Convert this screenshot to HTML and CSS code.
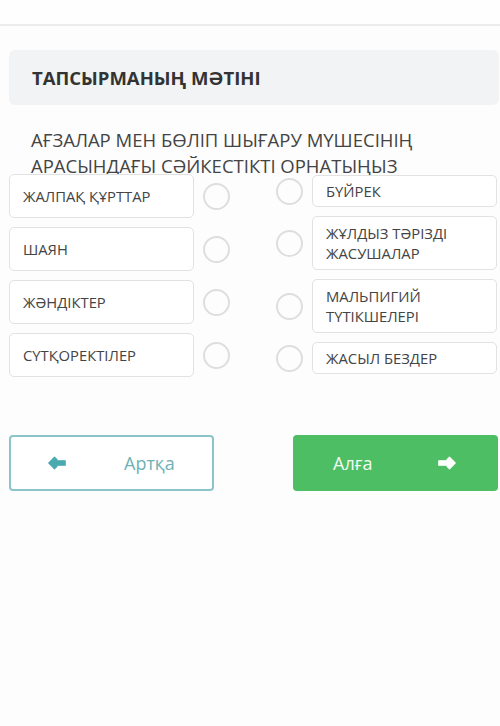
FILE: index.html
```html
<!DOCTYPE html>
<html lang="kk">
<head>
<meta charset="utf-8">
<title>Тапсырма</title>
<link rel="stylesheet" href="styles.css">
</head>
<body>
<div class="topbar"></div>

<div class="task-head">ТАПСЫРМАНЫҢ МӘТІНІ</div>

<p class="question">АҒЗАЛАР МЕН БӨЛІП ШЫҒАРУ МҮШЕСІНІҢ<br>АРАСЫНДАҒЫ СӘЙКЕСТІКТІ ОРНАТЫҢЫЗ</p>

<div class="match">
  <div class="col col-left">
    <div class="item"><div class="box">ЖАЛПАҚ ҚҰРТТАР</div><span class="dot"></span></div>
    <div class="item"><div class="box">ШАЯН</div><span class="dot"></span></div>
    <div class="item"><div class="box">ЖӘНДІКТЕР</div><span class="dot"></span></div>
    <div class="item"><div class="box">СҮТҚОРЕКТІЛЕР</div><span class="dot"></span></div>
  </div>
  <div class="col col-right">
    <div class="item"><span class="dot"></span><div class="box">БҮЙРЕК</div></div>
    <div class="item"><span class="dot"></span><div class="box">ЖҰЛДЫЗ ТӘРІЗДІ<br>ЖАСУШАЛАР</div></div>
    <div class="item"><span class="dot"></span><div class="box">МАЛЬПИГИЙ<br>ТҮТІКШЕЛЕРІ</div></div>
    <div class="item"><span class="dot"></span><div class="box">ЖАСЫЛ БЕЗДЕР</div></div>
  </div>
</div>

<div class="nav">
  <button class="btn btn-back" type="button">
    <svg class="arrow" viewBox="0 0 18 14" aria-hidden="true"><path d="M0.8 7 L6.5 1.2 L9 3.7 L7.9 4.8 H17.2 V9.2 H7.9 L9 10.3 L6.5 12.8 Z"/></svg>
    <span>Артқа</span>
  </button>
  <button class="btn btn-next" type="button">
    <span>Алға</span>
    <svg class="arrow" viewBox="0 0 18 14" aria-hidden="true"><path d="M17.2 7 L11.5 1.2 L9 3.7 L10.1 4.8 H0.8 V9.2 H10.1 L9 10.3 L11.5 12.8 Z"/></svg>
  </button>
</div>
</body>
</html>
```

FILE: styles.css
```css
* { box-sizing: border-box; }

body {
  margin: 0;
  background: #fdfdfd;
  font-family: "Open Sans", "Noto Sans", sans-serif;
  color: #444;
}

.topbar {
  height: 26px;
  border-bottom: 2px solid #ececec;
  background: #fefefe;
}

.task-head {
  margin: 24px 1px 0 9px;
  height: 55px;
  padding-left: 23px;
  display: flex;
  align-items: center;
  background: #f1f3f5;
  border-radius: 6px;
  font-size: 18.5px;
  font-weight: 700;
  color: #333;
}

.question {
  margin: 22px 0 -5px 31px;
  font-size: 18.5px;
  line-height: 26px;
  color: #444;
}

.match {
  display: flex;
  justify-content: space-between;
  padding: 0 3px 0 9px;
}

.col {
  display: flex;
  flex-direction: column;
  gap: 9px;
}

.item {
  display: flex;
  align-items: center;
  gap: 9px;
}

.box {
  width: 185px;
  border: 1px solid #e2e2e2;
  border-radius: 5px;
  background: #fff;
  font-size: 14.8px;
  color: #444;
  padding: 0 13px;
}

.col-left .box {
  height: 44px;
  display: flex;
  align-items: center;
}

.col-right { padding-top: 1px; }

.col-right .box {
  padding-top: 5px;
  padding-bottom: 5px;
  line-height: 20px;
}

.col-right .item:nth-child(2) .box,
.col-right .item:nth-child(3) .box {
  padding-top: 6px;
  padding-bottom: 6px;
}

.dot {
  width: 27px;
  height: 27px;
  border: 2px solid #dedede;
  border-radius: 50%;
  flex: none;
}

.nav {
  display: flex;
  justify-content: space-between;
  padding: 0 2px 0 9px;
  margin-top: 58px;
}

.btn {
  width: 205px;
  height: 56px;
  border-radius: 4px;
  display: flex;
  align-items: center;
  font-family: "Open Sans", "Noto Sans", sans-serif;
  font-size: 18px;
  cursor: pointer;
}

.btn .arrow {
  width: 18px;
  height: 14px;
  flex: none;
  stroke-linejoin: round;
  stroke-width: 1.2;
}

.btn-back {
  background: #fff;
  border: 2px solid #8cc5c9;
  color: #6eb1b6;
  padding-left: 37px;
  gap: 58px;
}

.btn-back .arrow { fill: #4aa9ae; stroke: #4aa9ae; }

.btn-next {
  background: #4dbe64;
  border: none;
  color: #f2fbf3;
  padding-left: 40px;
  gap: 66px;
}

.btn-next .arrow { fill: #fff; stroke: #fff; }
```
